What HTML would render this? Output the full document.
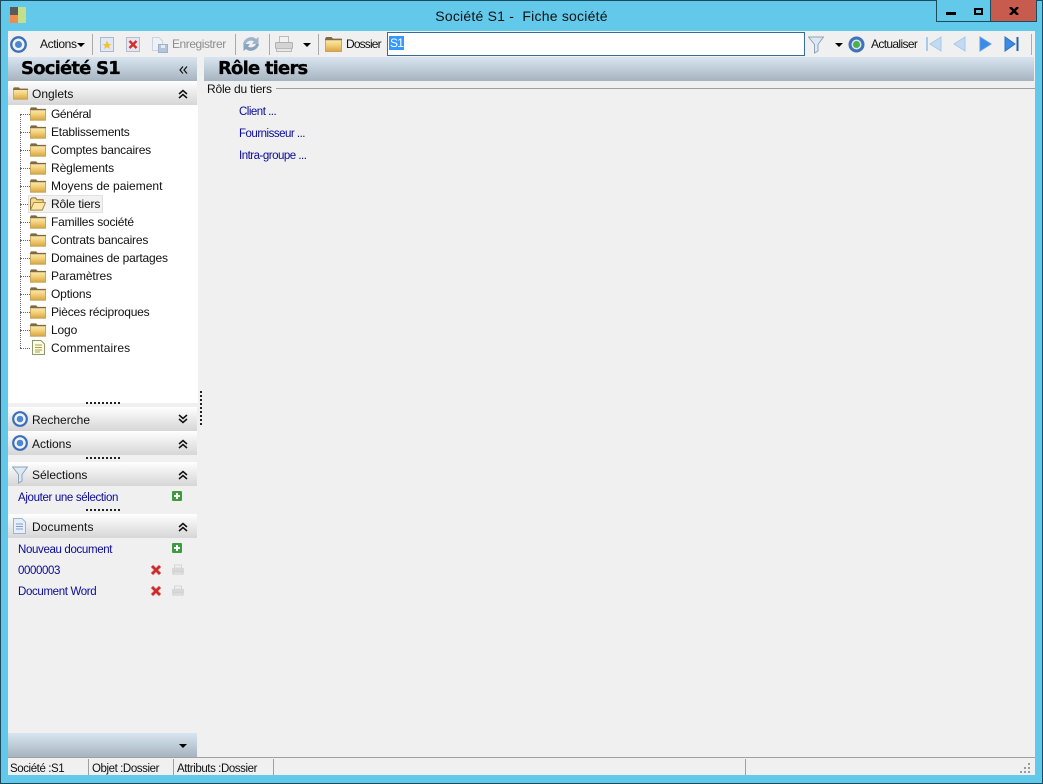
<!DOCTYPE html>
<html><head><meta charset="utf-8"><style>
html,body{margin:0;padding:0}
body{width:1043px;height:784px;overflow:hidden;position:relative;background:#62c9ea;font:12px "Liberation Sans",sans-serif;color:#111}
div,svg,span.a{position:absolute}
.t{position:absolute;white-space:nowrap;line-height:14px;letter-spacing:-.15px}
.l{color:#0a0a96;font-size:11.5px;letter-spacing:-.35px;margin-top:1px}
.m{letter-spacing:-.5px}
.st{font-size:11.5px;letter-spacing:-.42px;margin-top:1px}
.hd{position:absolute;background:linear-gradient(#d8e5f1,#a6b4c0)}
.sec{position:absolute;left:8px;width:189px;height:24px;background:linear-gradient(#fff,#f2f2f2 30%,#d6d6d6)}
.dots{position:absolute;left:86px;width:34px;height:2px;background:repeating-linear-gradient(90deg,#222 0,#222 2px,transparent 2px,transparent 4px)}
.sep{position:absolute;top:34px;width:1px;height:21px;background:#aaa}
.b{font-weight:bold;font-family:"DejaVu Sans",sans-serif;font-size:18px;letter-spacing:-.8px;line-height:24px;color:#000;position:absolute;white-space:nowrap;-webkit-text-stroke:.3px #000}
</style></head><body>
<svg width="0" height="0" style="position:absolute"><defs>
<linearGradient id="fg" x1="0" y1="0" x2="0" y2="1"><stop offset="0" stop-color="#fff6cf"/><stop offset=".5" stop-color="#f4d47e"/><stop offset="1" stop-color="#d8a23c"/></linearGradient>
<symbol id="folder" viewBox="0 0 17 14"><path d="M0 1.500L1 0H6.500L8 1.500H17V14H0Z" fill="url(#fg)"/><path d="M0 2L1 0H6.500L8 1.500H17V3H0Z" fill="#7d6a42"/><path d="M.5 3V13.500H16.500V3" fill="none" stroke="#c7a560"/></symbol>
<symbol id="open" viewBox="0 0 17 14"><path d="M.5 13V2L2 .5H6L7.500 2.500H14V5" fill="#f3d98b" stroke="#8a6c2c"/><path d="M.5 13.500L4 5.500H16.500L13 13.500Z" fill="#fbe6a5" stroke="#a5843c"/></symbol>
<symbol id="ring" viewBox="0 0 16 16"><circle cx="8" cy="8" r="6.800" fill="#eef4fb" stroke="#3b6fb8" stroke-width="2.200"/><circle cx="8" cy="8" r="3.300" fill="#4f86cc"/></symbol>
<symbol id="funnel" viewBox="0 0 16 18"><path d="M.5 1H15.500L10 8.500V15L6.500 17V8.500Z" fill="#dce8f2" stroke="#8da4b8"/></symbol>
<symbol id="up" viewBox="0 0 10 10"><path d="M1 5L5 1.500L9 5M1 9L5 5.500L9 9" fill="none" stroke="#111" stroke-width="1.500"/></symbol>
<symbol id="dn" viewBox="0 0 10 10"><path d="M1 1L5 4.500L9 1M1 5L5 8.500L9 5" fill="none" stroke="#111" stroke-width="1.500"/></symbol>
<symbol id="plus" viewBox="0 0 10 10"><rect width="10" height="10" rx="1" fill="#3e9b3e"/><path d="M5 2V8M2 5H8" stroke="#fff" stroke-width="2"/></symbol>
<symbol id="x" viewBox="0 0 12 12"><path d="M2 2L10 10M10 2L2 10" stroke="#e8b0b0" stroke-width="4"/><path d="M2 2L10 10M10 2L2 10" stroke="#c92a2a" stroke-width="2.600"/></symbol>
<symbol id="pr" viewBox="0 0 12 11"><rect x="2.500" y="1" width="7" height="3" fill="#f2f2f2" stroke="#d4d4d4"/><rect x="0" y="4" width="12" height="4" fill="#d8d8d8"/><rect x="1" y="8" width="10" height="2" fill="#eee" stroke="#ccc"/></symbol>
</defs></svg>

<div style="left:0;top:0;width:1043px;height:1px;background:#1d4a5c"></div>
<div style="left:0;top:783px;width:1043px;height:1px;background:#1d4a5c"></div>
<div style="left:0;top:0;width:1px;height:784px;background:#1d4a5c"></div>
<div style="left:1042px;top:0;width:1px;height:784px;background:#1d4a5c"></div>

<!-- logo -->
<div style="left:10px;top:7px;width:9px;height:8px;background:#5a5a5a"></div>
<div style="left:10px;top:15px;width:9px;height:8px;background:#f08b50"></div>
<div style="left:18px;top:7px;width:8px;height:16px;background:#c2e08a"></div>
<div class="t" style="left:0;top:8px;width:1043px;text-align:center;font-size:14px;line-height:16px;color:#111;letter-spacing:.22px">Société S1 -&nbsp; Fiche société</div>

<!-- window buttons -->
<div style="left:936px;top:0;width:28px;height:21px;border:1px solid #1d4a5c;border-top:0;background:#62c9ea"></div>
<div style="left:965px;top:0;width:25px;height:21px;border:1px solid #1d4a5c;border-top:0;border-left:0;background:#62c9ea"></div>
<div style="left:991px;top:0;width:45px;height:21px;border:1px solid #1d4a5c;border-top:0;border-left:0;background:#c75b4e"></div>
<div style="left:946px;top:12px;width:10px;height:3px;background:#000"></div>
<div style="left:974px;top:8px;width:5px;height:3px;border:2px solid #000"></div>
<svg style="left:1009px;top:7px" width="10" height="8"><path d="M1 0L9 8M9 0L1 8" stroke="#000" stroke-width="2.400"/></svg>

<!-- content -->
<div style="left:8px;top:31px;width:1027px;height:744px;background:#f0f0f0"></div>

<!-- toolbar -->
<svg style="left:10px;top:36px" width="17" height="17"><use href="#ring"/></svg>
<div class="t" style="left:40px;top:37px;letter-spacing:-.4px">Actions</div>
<div style="left:77px;top:43px;border:4px solid transparent;border-top:4px solid #000;border-bottom:0"></div>
<div class="sep" style="left:92px"></div>
<svg style="left:100px;top:37px" width="14" height="15"><rect x=".5" y=".5" width="13" height="14" fill="#dfe8f4" stroke="#a9bad0"/><path d="M7 3.500L8.500 7H11.500L9 9L10 12L7 10.200L4 12L5 9L2.500 7H5.500Z" fill="#f2c230"/></svg>
<svg style="left:126px;top:37px" width="14" height="15"><rect x=".5" y=".5" width="13" height="14" fill="#e4e6f0" stroke="#b8bccc"/><path d="M3.500 4L10.500 11M10.500 4L3.500 11" stroke="#d43030" stroke-width="2.500"/></svg>
<svg style="left:152px;top:37px" width="16" height="16"><path d="M.5.500H7L10.500 4V13.500H.5Z" fill="#eef2f7" stroke="#c9d4e0"/><rect x="6.500" y="7.500" width="9" height="8" fill="#b4c4dc" stroke="#a0b0c8"/><rect x="9" y="8" width="4" height="3" fill="#e6ecf4"/></svg>
<div class="t" style="left:172px;top:37px;color:#8d8d8d;letter-spacing:-.45px">Enregistrer</div>
<div class="sep" style="left:235px"></div>
<svg style="left:242px;top:35px" width="18" height="18"><path d="M1 9C2 3 10 0 14 4L16.500 2V9H10L12 6.500C9 4.500 5 6 4 9Z" fill="#9cb4cc"/><path d="M17 9C16 15 8 18 4 14L1.500 16V9H8L6 11.500C9 13.500 13 12 14 9Z" fill="#88a4be"/></svg>
<div class="sep" style="left:269px"></div>
<svg style="left:275px;top:36px" width="18" height="17"><rect x="4.500" y=".5" width="9" height="6" fill="#f2f2f2" stroke="#bbb"/><rect x=".5" y="6.500" width="17" height="6" rx="1" fill="#d4d4d4" stroke="#b0b0b0"/><rect x="1.500" y="12.500" width="15" height="3" fill="#e8e8e8" stroke="#b8b8b8"/></svg>
<div style="left:303px;top:43px;border:4px solid transparent;border-top:4px solid #000;border-bottom:0"></div>
<div class="sep" style="left:318px"></div>
<svg style="left:325px;top:37px" width="17" height="15" preserveAspectRatio="none" viewBox="0 0 17 14"><use href="#folder" width="17" height="14"/></svg>
<div class="t" style="left:346px;top:37px;letter-spacing:-.85px">Dossier</div>
<div style="left:387px;top:32px;width:416px;height:22px;border:1px solid #3a6a9a;background:#fff"></div>
<div class="t" style="left:389px;top:36px;background:#3399ff;color:#fff;padding:0 1px;line-height:14px;letter-spacing:-.8px">S1</div>
<svg style="left:808px;top:36px" width="16" height="18"><use href="#funnel"/></svg>
<div style="left:835px;top:43px;border:4px solid transparent;border-top:4px solid #000;border-bottom:0"></div>
<svg style="left:848px;top:36px" width="17" height="17"><circle cx="8.500" cy="8.500" r="6.500" fill="#d8e6f2" stroke="#3f72b8" stroke-width="3"/><circle cx="8.500" cy="8.500" r="3.500" fill="#4ab04a"/></svg>
<div class="t" style="left:871px;top:37px;letter-spacing:-.65px">Actualiser</div>
<svg style="left:926px;top:36px" width="18" height="16"><path d="M1 1V15" stroke="#a8c8ec" stroke-width="2"/><path d="M15 1V15L4 8Z" fill="#c4daf2" stroke="#a8c8ec"/></svg>
<svg style="left:953px;top:36px" width="14" height="16"><path d="M12 1V15L1 8Z" fill="#c4daf2" stroke="#a8c8ec"/></svg>
<svg style="left:979px;top:36px" width="14" height="16"><path d="M1 1V15L12 8Z" fill="#3a8ae8" stroke="#5f9de0"/></svg>
<svg style="left:1004px;top:36px" width="16" height="16"><path d="M1 1V15L11 8Z" fill="#3a8ae8" stroke="#2f6fc0"/><path d="M13.500 1V15" stroke="#2a5fb0" stroke-width="2"/></svg>
<div class="sep" style="left:1031px"></div>

<!-- headers -->
<div class="hd" style="left:8px;top:57px;width:189px;height:24px"></div>
<div class="b" style="left:21px;top:57px">Société S1</div>
<svg style="left:179px;top:66px" width="9" height="8"><path d="M4 .5L1 4L4 7.500M8 .5L5 4L8 7.500" fill="none" stroke="#111" stroke-width="1.200"/></svg>
<div class="hd" style="left:204px;top:57px;width:830px;height:24px"></div>
<div class="b" style="left:218px;top:57px">Rôle tiers</div>

<!-- onglets -->
<div class="sec" style="top:81px"></div>
<svg style="left:13px;top:87px" width="15" height="13"><use href="#folder"/></svg>
<div class="t" style="left:32px;top:87px;letter-spacing:0">Onglets</div>
<svg style="left:178px;top:89px" width="10" height="10"><use href="#up"/></svg>

<!-- tree -->
<div style="left:8px;top:105px;width:190px;height:298px;background:#fff"></div>
<div style="left:20px;top:114px;height:234px;border-left:1px dotted #666"></div>
<div style="left:20px;top:114px;width:10px;border-top:1px dotted #666"></div><div style="left:20px;top:132px;width:10px;border-top:1px dotted #666"></div><div style="left:20px;top:150px;width:10px;border-top:1px dotted #666"></div><div style="left:20px;top:168px;width:10px;border-top:1px dotted #666"></div><div style="left:20px;top:186px;width:10px;border-top:1px dotted #666"></div><div style="left:20px;top:204px;width:10px;border-top:1px dotted #666"></div><div style="left:20px;top:222px;width:10px;border-top:1px dotted #666"></div><div style="left:20px;top:240px;width:10px;border-top:1px dotted #666"></div><div style="left:20px;top:258px;width:10px;border-top:1px dotted #666"></div><div style="left:20px;top:276px;width:10px;border-top:1px dotted #666"></div><div style="left:20px;top:294px;width:10px;border-top:1px dotted #666"></div><div style="left:20px;top:312px;width:10px;border-top:1px dotted #666"></div><div style="left:20px;top:330px;width:10px;border-top:1px dotted #666"></div><div style="left:20px;top:348px;width:10px;border-top:1px dotted #666"></div>
<div style="left:28px;top:195px;width:73px;height:16px;background:#f2f2f2;border:1px solid #e2e2e2"></div>

<svg style="left:30px;top:107px" width="16" height="14"><use href="#folder"/></svg><div class="t" style="left:51px;top:107px;letter-spacing:-.4px">Général</div>
<svg style="left:30px;top:125px" width="16" height="14"><use href="#folder"/></svg><div class="t" style="left:51px;top:125px;letter-spacing:-.2px">Etablissements</div>
<svg style="left:30px;top:143px" width="16" height="14"><use href="#folder"/></svg><div class="t" style="left:51px;top:143px;letter-spacing:-.2px">Comptes bancaires</div>
<svg style="left:30px;top:161px" width="16" height="14"><use href="#folder"/></svg><div class="t" style="left:51px;top:161px;letter-spacing:-.1px">Règlements</div>
<svg style="left:30px;top:179px" width="16" height="14"><use href="#folder"/></svg><div class="t" style="left:51px;top:179px;letter-spacing:0">Moyens de paiement</div>
<svg style="left:30px;top:197px" width="16" height="14"><use href="#open"/></svg><div class="t" style="left:51px;top:197px">Rôle tiers</div>
<svg style="left:30px;top:215px" width="16" height="14"><use href="#folder"/></svg><div class="t" style="left:51px;top:215px;letter-spacing:-.2px">Familles société</div>
<svg style="left:30px;top:233px" width="16" height="14"><use href="#folder"/></svg><div class="t" style="left:51px;top:233px;letter-spacing:-.2px">Contrats bancaires</div>
<svg style="left:30px;top:251px" width="16" height="14"><use href="#folder"/></svg><div class="t" style="left:51px;top:251px;letter-spacing:-.2px">Domaines de partages</div>
<svg style="left:30px;top:269px" width="16" height="14"><use href="#folder"/></svg><div class="t" style="left:51px;top:269px;letter-spacing:-.1px">Paramètres</div>
<svg style="left:30px;top:287px" width="16" height="14"><use href="#folder"/></svg><div class="t" style="left:51px;top:287px">Options</div>
<svg style="left:30px;top:305px" width="16" height="14"><use href="#folder"/></svg><div class="t" style="left:51px;top:305px;letter-spacing:-.2px">Pièces réciproques</div>
<svg style="left:30px;top:323px" width="16" height="14"><use href="#folder"/></svg><div class="t" style="left:51px;top:323px">Logo</div>
<svg style="left:32px;top:340px" width="13" height="15"><path d="M.5.500H9L12.500 4V14.500H.5Z" fill="#fffbe0" stroke="#8a9a70"/><path d="M3 5H10M3 7.500H10M3 10H10M3 12H8" stroke="#a8a050"/></svg><div class="t" style="left:51px;top:341px;letter-spacing:.1px">Commentaires</div>

<div class="dots" style="top:402px"></div>
<div style="left:200px;top:391px;width:2px;height:34px;background:repeating-linear-gradient(#222 0,#222 2px,transparent 2px,transparent 4px)"></div>

<!-- Recherche -->
<div class="sec" style="top:407px"></div>
<svg style="left:12px;top:411px" width="16" height="16"><use href="#ring"/></svg>
<div class="t" style="left:32px;top:413px;letter-spacing:0">Recherche</div>
<svg style="left:178px;top:414px" width="10" height="10"><use href="#dn"/></svg>

<!-- Actions -->
<div class="sec" style="top:431px"></div>
<svg style="left:12px;top:435px" width="16" height="16"><use href="#ring"/></svg>
<div class="t" style="left:32px;top:437px;letter-spacing:0">Actions</div>
<svg style="left:178px;top:439px" width="10" height="10"><use href="#up"/></svg>
<div class="dots" style="top:457px"></div>

<!-- Selections -->
<div class="sec" style="top:462px"></div>
<svg style="left:12px;top:466px" width="16" height="18"><use href="#funnel"/></svg>
<div class="t" style="left:32px;top:468px;letter-spacing:0">Sélections</div>
<svg style="left:178px;top:470px" width="10" height="10"><use href="#up"/></svg>
<div class="t l" style="left:18px;top:490px">Ajouter une sélection</div>
<svg style="left:172px;top:491px" width="10" height="10"><use href="#plus"/></svg>
<div class="dots" style="top:509px"></div>

<!-- Documents -->
<div class="sec" style="top:514px"></div>
<svg style="left:13px;top:518px" width="13" height="16"><path d="M.5.500H9L12.500 4V15.500H.5Z" fill="#e6eefa" stroke="#9db4d8"/><path d="M3 6H10M3 8.500H10M3 11H10" stroke="#7f9cc8"/></svg>
<div class="t" style="left:32px;top:520px;letter-spacing:.1px">Documents</div>
<svg style="left:178px;top:522px" width="10" height="10"><use href="#up"/></svg>
<div class="t l" style="left:18px;top:542px">Nouveau document</div>
<svg style="left:172px;top:543px" width="10" height="10"><use href="#plus"/></svg>
<div class="t l" style="left:18px;top:563px;letter-spacing:-.4px">0000003</div>
<svg style="left:150px;top:564px" width="12" height="12"><use href="#x"/></svg>
<svg style="left:172px;top:564px" width="12" height="11"><use href="#pr"/></svg>
<div class="t l" style="left:18px;top:584px">Document Word</div>
<svg style="left:150px;top:585px" width="12" height="12"><use href="#x"/></svg>
<svg style="left:172px;top:585px" width="12" height="11"><use href="#pr"/></svg>

<!-- bottom -->
<div class="hd" style="left:8px;top:733px;width:189px;height:24px"></div>
<div style="left:179px;top:744px;border:4px solid transparent;border-top:4px solid #000;border-bottom:0"></div>

<!-- main -->
<div class="t" style="left:207px;top:82px;letter-spacing:-.2px">Rôle du tiers</div>
<div style="left:276px;top:88px;width:759px;height:1px;background:#a0a0a0"></div>
<div class="t l m" style="left:239px;top:104px">Client ...</div>
<div class="t l m" style="left:239px;top:126px">Fournisseur ...</div>
<div class="t l m" style="left:239px;top:148px">Intra-groupe ...</div>

<!-- status -->
<div style="left:8px;top:757px;width:1027px;height:1px;background:#a0a0a0"></div>
<div style="left:88px;top:759px;width:1px;height:16px;background:#a0a0a0"></div>
<div style="left:173px;top:759px;width:1px;height:16px;background:#a0a0a0"></div>
<div style="left:273px;top:759px;width:1px;height:16px;background:#a0a0a0"></div>
<div style="left:745px;top:759px;width:1px;height:16px;background:#a0a0a0"></div>
<div class="t st" style="left:10px;top:761px">Société :S1</div>
<div class="t st" style="left:92px;top:761px">Objet :Dossier</div>
<div class="t st" style="left:177px;top:761px">Attributs :Dossier</div>
<div style="left:1028px;top:763px;width:2px;height:2px;background:#999"></div>
<div style="left:1024px;top:767px;width:2px;height:2px;background:#999"></div>
<div style="left:1028px;top:767px;width:2px;height:2px;background:#999"></div>
<div style="left:1020px;top:771px;width:2px;height:2px;background:#999"></div>
<div style="left:1024px;top:771px;width:2px;height:2px;background:#999"></div>
<div style="left:1028px;top:771px;width:2px;height:2px;background:#999"></div>
</body></html>
